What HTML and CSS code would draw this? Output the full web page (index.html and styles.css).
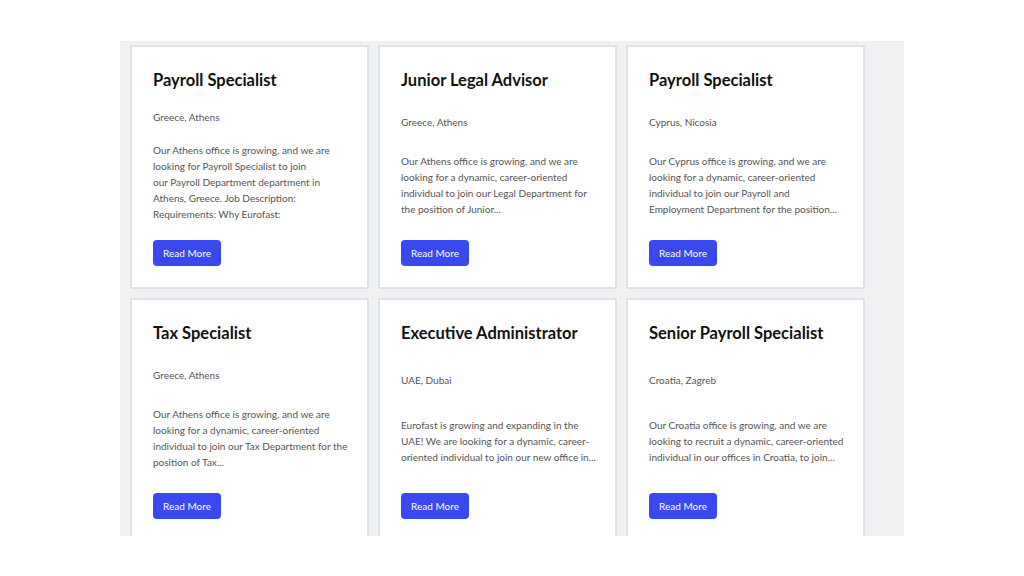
FILE: index.html
```html
<!DOCTYPE html>
<html>
<head>
<meta charset="utf-8">
<link rel="stylesheet" href="styles.css">
</head>
<body>
<div class="panel">
  <div class="grid">
    <div class="card">
      <h2 class="title">Payroll Specialist</h2>
      <p class="loc">Greece, Athens</p>
      <p class="desc">Our Athens office is growing, and we are<br>looking for Payroll Specialist to join<br>our Payroll Department department in<br>Athens, Greece. Job Description:<br>Requirements: Why Eurofast:</p>
      <a class="btn">Read More</a>
    </div>
    <div class="card">
      <h2 class="title">Junior Legal Advisor</h2>
      <p class="loc">Greece, Athens</p>
      <p class="desc">Our Athens office is growing, and we are<br>looking for a dynamic, career-oriented<br>individual to join our Legal Department for<br>the position of Junior...</p>
      <a class="btn">Read More</a>
    </div>
    <div class="card">
      <h2 class="title">Payroll Specialist</h2>
      <p class="loc">Cyprus, Nicosia</p>
      <p class="desc">Our Cyprus office is growing, and we are<br>looking for a dynamic, career-oriented<br>individual to join our Payroll and<br>Employment Department for the position...</p>
      <a class="btn">Read More</a>
    </div>
    <div class="card">
      <h2 class="title">Tax Specialist</h2>
      <p class="loc">Greece, Athens</p>
      <p class="desc">Our Athens office is growing, and we are<br>looking for a dynamic, career-oriented<br>individual to join our Tax Department for the<br>position of Tax...</p>
      <a class="btn">Read More</a>
    </div>
    <div class="card">
      <h2 class="title">Executive Administrator</h2>
      <p class="loc">UAE, Dubai</p>
      <p class="desc">Eurofast is growing and expanding in the<br>UAE! We are looking for a dynamic, career-<br>oriented individual to join our new office in...</p>
      <a class="btn">Read More</a>
    </div>
    <div class="card">
      <h2 class="title">Senior Payroll Specialist</h2>
      <p class="loc">Croatia, Zagreb</p>
      <p class="desc">Our Croatia office is growing, and we are<br>looking to recruit a dynamic, career-oriented<br>individual in our offices in Croatia, to join...</p>
      <a class="btn">Read More</a>
    </div>
  </div>
</div>
</body>
</html>
```
FILE: styles.css
```css
* { box-sizing: border-box; }
html, body { margin: 0; padding: 0; background: #ffffff; }
body { font-family: "Lato", "Open Sans", sans-serif; }
.panel {
  margin: 41px 0 0 120px;
  width: 784px;
  height: 495px;
  overflow: hidden;
  background: #f0f1f3;
  padding: 4px 39px 0 10px;
}
.grid {
  display: grid;
  grid-template-columns: repeat(3, 239px);
  column-gap: 9px;
  row-gap: 9px;
}
.card {
  height: 244px;
  background: #ffffff;
  border: 2px solid #dfe2e6;
  padding: 22px 21px 21px 21px;
  display: flex;
  flex-direction: column;
  justify-content: space-between;
  align-items: flex-start;
}
.title {
  margin: 0;
  font-size: 16.5px;
  line-height: 22px;
  font-weight: 700;
  color: #111111;
  white-space: nowrap;
}
.loc {
  margin: 0;
  font-size: 10px;
  line-height: 16px;
  color: #555555;
}
.desc {
  margin: 0;
  font-size: 10px;
  line-height: 16px;
  color: #555555;
  white-space: nowrap;
}
.btn {
  display: inline-flex;
  align-items: center;
  justify-content: center;
  width: 68px;
  height: 26px;
  border-radius: 4px;
  background: #3a48f0;
  color: #ffffff;
  font-size: 10px;
}
```
